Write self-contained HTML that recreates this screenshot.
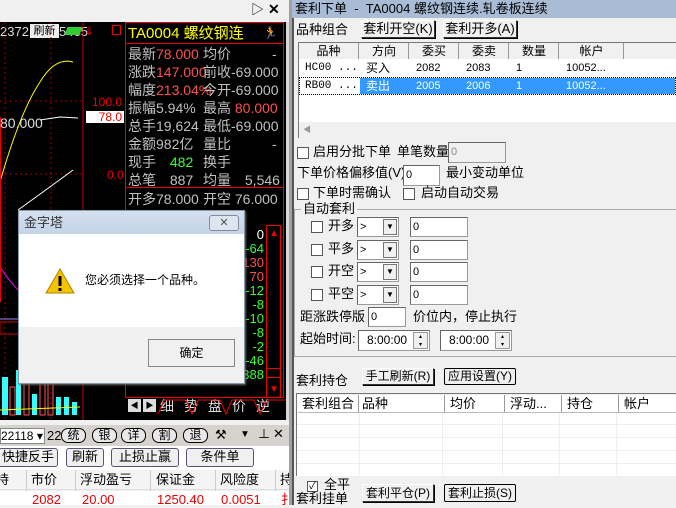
<html><head><style>
*{margin:0;padding:0;box-sizing:border-box}
body{width:676px;height:505px;overflow:hidden;background:#f0f0f0;font-family:"Liberation Sans","Noto Sans CJK SC",sans-serif;font-size:12px;position:relative;color:#000;line-height:1.2}
.a{position:absolute;white-space:nowrap}
.btn{position:absolute;border:1px solid #333;border-top-color:#fff;border-left-color:#fff;box-shadow:1px 1px 0 #000;background:#f0f0f0;text-align:center;font-size:12px;line-height:16px;white-space:nowrap;overflow:hidden}
.cb{position:absolute;width:12px;height:12px;border:1px solid #555;background:#fff}
.inp{position:absolute;background:#fff;border:1px solid #999;border-top-color:#666;border-left-color:#666;font-size:11px;padding-left:2px;line-height:18px}
.pt{position:absolute;font-size:14px;color:#c0c0c0;white-space:nowrap}
.r{color:#ff5050}
</style></head><body>
<div class="a" style="left:0;top:0;width:289px;height:22px;background:#f0f0f0"></div>
<div class="a" style="left:251px;top:2px;font-size:13px">▷</div>
<div class="a" style="left:268px;top:1px;font-size:14px;font-weight:bold">✕</div>
<div class="a" style="left:0;top:22px;width:287px;height:398px;background:#000"></div>
<div class="a" style="left:286px;top:22px;width:3px;height:398px;background:#d8d8d8"></div>
<div class="a" style="left:0;top:24px;color:#ddd;font-size:13px">2372</div>
<div class="a" style="left:30px;top:24px;width:29px;height:14px;background:#eee;font-size:11px;color:#000;text-align:center;line-height:14px">刷新</div>
<div class="a" style="left:59px;top:24px;color:#ddd;font-size:13px">5465</div>
<div class="a" style="left:66px;top:27px;width:15px;height:8px;background:#3c3;transform:skew(-20deg)"></div>
<div class="a" style="left:84px;top:24px;color:#e00;font-size:12px">⇓</div>
<div class="a" style="left:112px;top:25px;width:9px;height:10px;border:1px solid #e00"></div>
<svg class="a" style="left:0;top:22px" width="125" height="398">
<line x1="83" y1="0" x2="83" y2="398" stroke="#c00"/>
<line x1="5" y1="0" x2="5" y2="398" stroke="#a00" stroke-dasharray="2,3"/>
<line x1="51" y1="0" x2="51" y2="398" stroke="#a00" stroke-dasharray="2,3"/>
<line x1="0" y1="79" x2="83" y2="79" stroke="#a00" stroke-dasharray="2,3"/>
<line x1="0" y1="152" x2="83" y2="152" stroke="#a00" stroke-dasharray="2,3"/>
<path d="M0 160 Q20 90 40 60 Q55 35 73 40" stroke="#ff0" fill="none"/>
<path d="M18 188 Q50 165 73 148" stroke="#fff" fill="none"/>
<path d="M40 98 L60 95 L78 96" stroke="#fff" fill="none"/>
<path d="M0 245 Q10 260 20 270" stroke="#f0f" fill="none"/>
<line x1="0" y1="95" x2="0" y2="280" stroke="#e00" stroke-width="2"/>
<line x1="0" y1="297" x2="83" y2="297" stroke="#88f"/>
<rect x="0" y="300" width="83" height="12" fill="none" stroke="#c00"/>
<rect x="2" y="355" width="6" height="38" fill="#3ff"/><rect x="10" y="365" width="5" height="28" fill="none" stroke="#f55"/>
<rect x="16" y="348" width="5" height="45" fill="#3ff"/><rect x="24" y="360" width="5" height="33" fill="none" stroke="#f55"/>
<rect x="32" y="372" width="5" height="21" fill="#3ff"/><rect x="40" y="355" width="5" height="38" fill="none" stroke="#f55"/>
<rect x="48" y="355" width="5" height="38" fill="none" stroke="#f55"/><rect x="56" y="375" width="5" height="18" fill="#3ff"/>
<rect x="64" y="375" width="5" height="18" fill="#3ff"/><rect x="72" y="380" width="5" height="13" fill="#3ff"/>
<path d="M0 388 L80 385" stroke="#ff0" fill="none"/>
</svg>
<div class="a" style="left:0;top:115px;color:#ddd;font-size:14px">80.000</div>
<div class="a" style="left:92px;top:95px;color:#e00;font-size:12px">100.0</div>
<div class="a" style="left:107px;top:168px;color:#e00;font-size:12px">0.0</div>
<div class="a" style="left:86px;top:111px;width:38px;height:12px;background:#fff;color:#e00;font-size:12px;line-height:12px;text-align:right;padding-right:2px">78.0</div>
<div class="a" style="left:125px;top:22px;width:159px;height:376px;border:1px solid #e00"></div>
<div class="a" style="left:126px;top:43px;width:157px;height:1px;background:#e00"></div>
<div class="a" style="left:126px;top:187px;width:157px;height:1px;background:#e00"></div>
<div class="a" style="left:128px;top:25px;color:#ff0;font-size:15px">TA0004 螺纹钢连</div>
<div class="a" style="left:263px;top:26px;color:#ff0;font-size:12px">🏃</div>
<div class="pt" style="left:128px;top:46px">最新<span class="r">78.000</span></div><div class="pt" style="left:203px;top:46px">均价</div><div class="pt" style="left:272px;top:46px">-</div>
<div class="pt" style="left:128px;top:64px">涨跌<span class="r">147.000</span></div><div class="pt" style="left:203px;top:64px">前收-69.000</div>
<div class="pt" style="left:128px;top:82px">幅度<span class="r">213.04%</span></div><div class="pt" style="left:203px;top:82px">今开-69.000</div>
<div class="pt" style="left:128px;top:100px">振幅<span>5.94%</span></div><div class="pt" style="left:203px;top:100px">最高 <span class="r">80.000</span></div>
<div class="pt" style="left:128px;top:118px">总手19,624</div><div class="pt" style="left:203px;top:118px">最低-69.000</div>
<div class="pt" style="left:128px;top:136px">金额982亿</div><div class="pt" style="left:203px;top:136px">量比</div><div class="pt" style="left:272px;top:136px">-</div>
<div class="pt" style="left:128px;top:154px">现手 <span style="color:#3f3;margin-left:10px">482</span></div><div class="pt" style="left:203px;top:154px">换手</div>
<div class="pt" style="left:128px;top:172px">总笔 <span style="margin-left:10px">887</span></div><div class="pt" style="left:203px;top:172px">均量 <span style="margin-left:10px">5,546</span></div>
<div class="pt" style="left:128px;top:191px">开多78.000</div><div class="pt" style="left:203px;top:191px">开空 76.000</div>
<div class="a" style="left:230px;top:228px;width:34px;text-align:right;font-size:13px;line-height:14px;color:#3f3">
<div style="color:#fff">0</div><div>-64</div><div class="r">130</div><div class="r">70</div><div>-12</div><div>-8</div><div>-10</div><div>-8</div><div>-2</div><div>-46</div><div>388</div></div>
<div class="a" style="left:266px;top:225px;width:15px;height:173px;border:1px solid #e00"></div>
<div class="a" style="left:269px;top:228px;color:#e00;font-size:10px">▲</div>
<div class="a" style="left:269px;top:384px;color:#e00;font-size:10px">▼</div>
<div class="a" style="left:266px;top:368px;width:15px;height:10px;border-top:1px solid #e00;border-bottom:1px solid #e00"></div>
<div class="a" style="left:128px;top:399px;width:13px;height:13px;background:#ddd;font-size:8px;text-align:center;line-height:13px">◀</div>
<div class="a" style="left:143px;top:399px;width:13px;height:13px;background:#ddd;font-size:8px;text-align:center;line-height:13px">▶</div>
<div class="a" style="left:160px;top:398px;color:#ddd;font-size:14px;letter-spacing:10px">细势盘价逆</div>
<svg class="a" style="left:158px;top:396px" width="128" height="20"><path d="M0 18 L6 4 L28 4 L34 18 L40 4 L62 4 L68 18 L74 4 L96 4 L102 18 L108 4 L128 4" stroke="#e00" fill="none"/></svg>
<div class="a" style="left:18px;top:210px;width:227px;height:174px;border:1px solid #8899aa;background:#f0f0f0;box-shadow:1px 1px 2px #666"></div>
<div class="a" style="left:19px;top:211px;width:225px;height:23px;background:linear-gradient(#d4e0ee,#c4d4e8)"></div>
<div class="a" style="left:24px;top:215px;font-size:13px;color:#333">金字塔</div>
<div class="a" style="left:209px;top:215px;width:30px;height:16px;border:1px solid #889;border-radius:3px;background:#dde6f0;text-align:center;font-size:11px;line-height:14px;color:#555">✕</div>
<div class="a" style="left:19px;top:234px;width:225px;height:93px;background:#fff"></div>
<svg class="a" style="left:45px;top:268px" width="30" height="26"><path d="M15 1 L29 25 L1 25 Z" fill="#f5c400" stroke="#b08000"/><rect x="13.5" y="8" width="3" height="10" fill="#000"/><rect x="13.5" y="20" width="3" height="3" fill="#000"/></svg>
<div class="a" style="left:85px;top:273px;font-size:12px">您必须选择一个品种。</div>
<div class="btn" style="left:148px;top:339px;width:87px;height:28px;line-height:26px;border-color:#888;box-shadow:none">确定</div>
<div class="a" style="left:0;top:421px;width:289px;height:4px;background:#f0f0f0"></div>
<div class="a" style="left:0;top:425px;width:289px;height:21px;background:#d6d3ce"></div>
<div class="a" style="left:0;top:428px;width:45px;height:16px;background:#fff;border:1px solid #888;font-size:12px;line-height:14px">22118 ▾</div>
<div class="a" style="left:47px;top:428px;font-size:13px">22</div>
<div class="btn" style="left:61px;top:428px;width:25px;height:15px;border-radius:7px;border:1px solid #000;box-shadow:none;background:#e8e8e8;line-height:13px">统</div>
<div class="btn" style="left:92px;top:428px;width:25px;height:15px;border-radius:7px;border:1px solid #000;box-shadow:none;background:#e8e8e8;line-height:13px">银</div>
<div class="btn" style="left:121px;top:428px;width:25px;height:15px;border-radius:7px;border:1px solid #000;box-shadow:none;background:#e8e8e8;line-height:13px">详</div>
<div class="btn" style="left:152px;top:428px;width:25px;height:15px;border-radius:7px;border:1px solid #000;box-shadow:none;background:#e8e8e8;line-height:13px">割</div>
<div class="btn" style="left:183px;top:428px;width:25px;height:15px;border-radius:7px;border:1px solid #000;box-shadow:none;background:#e8e8e8;line-height:13px">退</div>
<div class="a" style="left:215px;top:427px;font-size:13px">⚒</div>
<div class="a" style="left:240px;top:429px;font-size:10px">▼</div>
<div class="a" style="left:258px;top:427px;font-size:12px">⊥</div>
<div class="a" style="left:273px;top:426px;font-size:13px">✕</div>
<div class="a" style="left:0;top:446px;width:289px;height:24px;background:#fff"></div>
<div class="btn" style="left:-2px;top:448px;width:60px;height:19px;border:1px solid #557;border-radius:3px;box-shadow:none;font-size:13px">快捷反手</div>
<div class="btn" style="left:66px;top:448px;width:38px;height:19px;border:1px solid #557;border-radius:3px;box-shadow:none;font-size:13px">刷新</div>
<div class="btn" style="left:111px;top:448px;width:68px;height:19px;border:1px solid #557;border-radius:3px;box-shadow:none;font-size:13px">止损止赢</div>
<div class="btn" style="left:186px;top:448px;width:68px;height:19px;border:1px solid #557;border-radius:3px;box-shadow:none;font-size:13px">条件单</div>
<div class="a" style="left:0;top:470px;width:289px;height:20px;background:#f4f4f4;border-bottom:1px solid #ddd;font-size:13px;line-height:19px">
<span class="a" style="left:-4px">持</span><span class="a" style="left:31px">市价</span><span class="a" style="left:80px">浮动盈亏</span><span class="a" style="left:156px">保证金</span><span class="a" style="left:220px">风险度</span><span class="a" style="left:280px">持</span></div>
<div class="a" style="left:26px;top:470px;width:1px;height:35px;background:#ccc"></div>
<div class="a" style="left:75px;top:470px;width:1px;height:35px;background:#ccc"></div>
<div class="a" style="left:150px;top:470px;width:1px;height:35px;background:#ccc"></div>
<div class="a" style="left:215px;top:470px;width:1px;height:35px;background:#ccc"></div>
<div class="a" style="left:275px;top:470px;width:1px;height:35px;background:#ccc"></div>
<div class="a" style="left:0;top:491px;width:289px;height:14px;background:#fff;color:#e00;font-size:13px;line-height:17px">
<span class="a" style="left:32px">2082</span><span class="a" style="left:82px">20.00</span><span class="a" style="left:157px">1250.40</span><span class="a" style="left:221px">0.0051</span><span class="a" style="left:281px">扌</span></div>
<div class="a" style="left:289px;top:0;width:3px;height:505px;background:#a0a0a0"></div>
<div class="a" style="left:292px;top:18px;width:2px;height:487px;background:#555"></div>
<div class="a" style="left:292px;top:0;width:384px;height:18px;background:#a8bcd6"></div>
<div class="a" style="left:295px;top:1px;font-size:13px">套利下单 &nbsp;- &nbsp;TA0004 螺纹钢连续.轧卷板连续</div>
<div class="a" style="left:296px;top:22px;font-size:13px">品种组合</div>
<div class="btn" style="left:361px;top:20px;width:74px;height:18px;font-size:13px">套利开空(K)</div>
<div class="btn" style="left:443px;top:20px;width:74px;height:18px;font-size:13px">套利开多(A)</div>
<div class="a" style="left:298px;top:42px;width:378px;height:96px;background:#fff;border:1px solid #777;border-right:none"></div>
<div class="a" style="left:299px;top:43px;width:377px;height:16px;background:#f0f0f0;font-size:12px;line-height:16px">
<span class="a" style="left:0;width:60px;text-align:center;border-right:1px solid #999">品种</span><span class="a" style="left:61px;width:49px;text-align:center;border-right:1px solid #999">方向</span><span class="a" style="left:111px;width:49px;text-align:center;border-right:1px solid #999">委买</span><span class="a" style="left:161px;width:49px;text-align:center;border-right:1px solid #999">委卖</span><span class="a" style="left:211px;width:49px;text-align:center;border-right:1px solid #999">数量</span><span class="a" style="left:261px;width:64px;text-align:center;border-right:1px solid #999">帐户</span></div>
<div class="a" style="left:299px;top:59px;width:377px;height:18px;font-size:11px;line-height:18px">
<span class="a" style="left:6px;font-family:'Liberation Mono'">HC00 ...</span><span class="a" style="left:67px;font-size:12px">买入</span><span class="a" style="left:117px">2082</span><span class="a" style="left:167px">2083</span><span class="a" style="left:217px">1</span><span class="a" style="left:267px">10052...</span></div>
<div class="a" style="left:299px;top:77px;width:377px;height:18px;font-size:11px;line-height:16px;border:1px dotted #000">
<span class="a" style="left:5px;font-family:'Liberation Mono'">RB00 ...</span><span class="a" style="left:60px;width:315px;height:16px;background:#3399ff"></span><span class="a" style="left:66px;font-size:12px;color:#fff">卖出</span><span class="a" style="left:116px;color:#fff">2005</span><span class="a" style="left:166px;color:#fff">2006</span><span class="a" style="left:216px;color:#fff">1</span><span class="a" style="left:266px;color:#fff">10052...</span></div>
<div class="a" style="left:299px;top:122px;width:377px;height:16px;background:#f0f0f0;font-size:8px;color:#999;padding:3px 4px">◀</div>
<div class="cb" style="left:297px;top:147px"></div>
<div class="a" style="left:313px;top:144px;font-size:13px">启用分批下单</div>
<div class="a" style="left:397px;top:144px;font-size:13px">单笔数量</div>
<div class="inp" style="left:448px;top:142px;width:58px;height:21px;background:#f0f0f0;color:#888">0</div>
<div class="a" style="left:297px;top:165px;font-size:13px">下单价格偏移值(V):</div>
<div class="inp" style="left:403px;top:165px;width:37px;height:21px">0</div>
<div class="a" style="left:446px;top:165px;font-size:13px">最小变动单位</div>
<div class="cb" style="left:297px;top:188px"></div>
<div class="a" style="left:313px;top:185px;font-size:13px">下单时需确认</div>
<div class="cb" style="left:403px;top:188px"></div>
<div class="a" style="left:421px;top:185px;font-size:13px">启动自动交易</div>
<div class="a" style="left:294px;top:209px;width:383px;height:148px;border:1px solid #aaa;border-right:none"></div>
<div class="a" style="left:301px;top:201px;font-size:13px;background:#f0f0f0;padding:0 2px">自动套利</div>
<div class="cb" style="left:311px;top:221px"></div><div class="a" style="left:328px;top:218px;font-size:13px">开多</div>
<div class="cb" style="left:311px;top:244px"></div><div class="a" style="left:328px;top:241px;font-size:13px">平多</div>
<div class="cb" style="left:311px;top:266px"></div><div class="a" style="left:328px;top:263px;font-size:13px">开空</div>
<div class="cb" style="left:311px;top:289px"></div><div class="a" style="left:328px;top:286px;font-size:13px">平空</div>
<div class="inp" style="left:357px;top:217px;width:42px;height:20px">&gt;<span class="a" style="left:25px;top:1px;width:14px;height:16px;background:#f0f0f0;border:1px solid #777;font-size:8px;line-height:14px;text-align:center">▼</span></div>
<div class="inp" style="left:357px;top:240px;width:42px;height:20px">&gt;<span class="a" style="left:25px;top:1px;width:14px;height:16px;background:#f0f0f0;border:1px solid #777;font-size:8px;line-height:14px;text-align:center">▼</span></div>
<div class="inp" style="left:357px;top:262px;width:42px;height:20px">&gt;<span class="a" style="left:25px;top:1px;width:14px;height:16px;background:#f0f0f0;border:1px solid #777;font-size:8px;line-height:14px;text-align:center">▼</span></div>
<div class="inp" style="left:357px;top:285px;width:42px;height:20px">&gt;<span class="a" style="left:25px;top:1px;width:14px;height:16px;background:#f0f0f0;border:1px solid #777;font-size:8px;line-height:14px;text-align:center">▼</span></div>
<div class="inp" style="left:410px;top:217px;width:58px;height:20px">0</div>
<div class="inp" style="left:410px;top:240px;width:58px;height:20px">0</div>
<div class="inp" style="left:410px;top:262px;width:58px;height:20px">0</div>
<div class="inp" style="left:410px;top:285px;width:58px;height:20px">0</div>
<div class="a" style="left:300px;top:309px;font-size:13px">距涨跌停版</div>
<div class="inp" style="left:368px;top:307px;width:38px;height:20px">0</div>
<div class="a" style="left:413px;top:309px;font-size:13px">价位内，停止执行</div>
<div class="a" style="left:300px;top:331px;font-size:13px">起始时间:</div>
<div class="inp" style="left:358px;top:330px;width:72px;height:21px;font-size:12px;padding-left:8px">8:00:00<span class="a" style="left:54px;top:1px;width:15px;height:17px;background:#f0f0f0;border:1px solid #999;font-size:6px;line-height:8px;text-align:center">▴<br>▾</span></div>
<div class="inp" style="left:440px;top:330px;width:72px;height:21px;font-size:12px;padding-left:8px">8:00:00<span class="a" style="left:54px;top:1px;width:15px;height:17px;background:#f0f0f0;border:1px solid #999;font-size:6px;line-height:8px;text-align:center">▴<br>▾</span></div>
<div class="a" style="left:296px;top:373px;font-size:13px">套利持仓</div>
<div class="btn" style="left:362px;top:368px;width:72px;height:17px;font-size:12px;line-height:15px">手工刷新(R)</div>
<div class="btn" style="left:444px;top:368px;width:72px;height:17px;font-size:12px;line-height:15px;border:1px solid #000;border-radius:2px;box-shadow:none">应用设置(Y)</div>
<div class="a" style="left:296px;top:393px;width:380px;height:83px;background:#fff;border:1px solid #777;border-right:none;border-bottom:none;
background-image:repeating-linear-gradient(#fff 0 12px,#eee 12px 13px);background-position:0 18px"></div>
<div class="a" style="left:298px;top:395px;width:378px;height:18px;background:#fff;border-bottom:1px solid #bbb;font-size:13px;line-height:17px">
<span class="a" style="left:0;width:61px;text-align:center;border-right:1px solid #999">套利组合</span><span class="a" style="left:64px">品种</span><span class="a" style="left:146px;border-left:1px solid #999;padding-left:5px">均价</span><span class="a" style="left:206px;border-left:1px solid #999;padding-left:5px">浮动...</span><span class="a" style="left:263px;border-left:1px solid #999;padding-left:5px">持仓</span><span class="a" style="left:320px;border-left:1px solid #999;padding-left:5px">帐户</span></div>
<div class="a" style="left:359px;top:413px;width:1px;height:62px;background:#eee"></div>
<div class="a" style="left:442px;top:413px;width:1px;height:62px;background:#eee"></div>
<div class="a" style="left:502px;top:413px;width:1px;height:62px;background:#eee"></div>
<div class="a" style="left:559px;top:413px;width:1px;height:62px;background:#eee"></div>
<div class="a" style="left:616px;top:413px;width:1px;height:62px;background:#eee"></div>
<div class="a" style="left:307px;top:481px;width:11px;height:11px;border:1px solid #555;background:#fff;font-size:10px;line-height:9px;text-align:center">✓</div>
<div class="a" style="left:324px;top:477px;font-size:13px">全平</div>
<div class="a" style="left:296px;top:491px;font-size:13px">套利挂单</div>
<div class="btn" style="left:362px;top:484px;width:72px;height:18px;font-size:12px;line-height:16px">套利平仓(P)</div>
<div class="btn" style="left:444px;top:484px;width:72px;height:18px;font-size:12px;line-height:16px;border:1px solid #000;border-radius:2px;box-shadow:none">套利止损(S)</div>
</body></html>
